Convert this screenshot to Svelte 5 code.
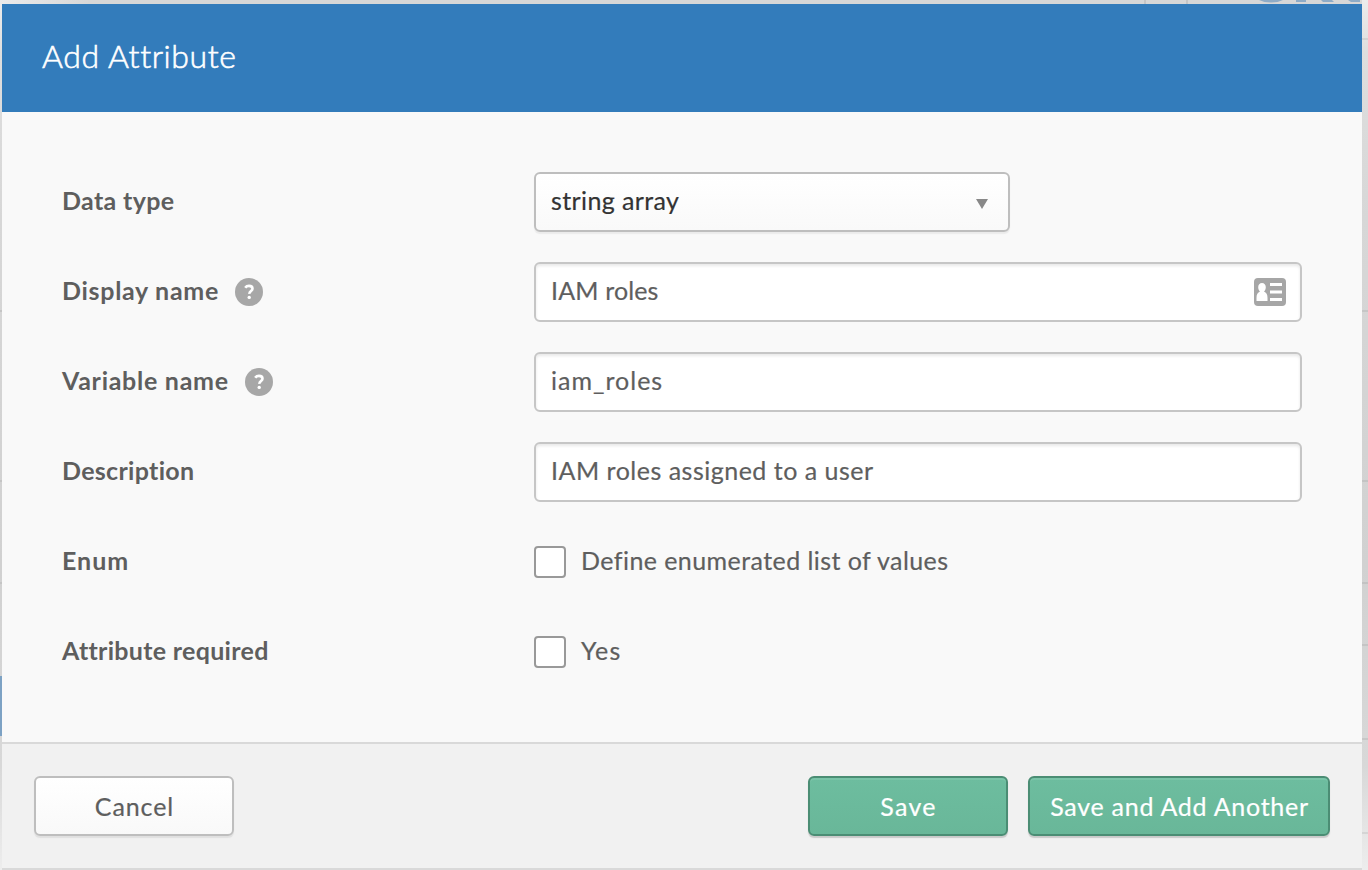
<script>
  let displayName = $state('IAM roles');
  let variableName = $state('iam_roles');
  let description = $state('IAM roles assigned to a user');
  let isEnum = $state(false);
  let required = $state(false);
</script>

{#snippet help()}
  <svg class="help" viewBox="0 0 28 28" aria-hidden="true">
    <circle cx="14" cy="14" r="14" fill="#a7a7a7" />
    <path d="M10.2 9.700C11.200 8.300 12.500 7.900 14 7.900c2.200 0 3.500 1.100 3.500 2.800 0 2.400-3.200 2.400-3.100 5.200" fill="none" stroke="#fff" stroke-width="2.600" />
    <circle cx="14.200" cy="19.400" r="1.700" fill="#fff" />
  </svg>
{/snippet}

<div class="page">
  <svg class="backdrop" viewBox="0 0 1368 870" aria-hidden="true">
    <defs>
      <linearGradient id="corner" x1="0" x2="1"><stop offset="0" stop-color="#ebebeb" /><stop offset="1" stop-color="#d7d7d7" /></linearGradient>
      <linearGradient id="side" x1="0" x2="0" y1="0" y2="1"><stop offset="0" stop-color="#ececec" /><stop offset=".06" stop-color="#dedede" /><stop offset=".25" stop-color="#d7d7d7" /><stop offset=".65" stop-color="#d1d1d1" /><stop offset=".88" stop-color="#d8d8d8" /><stop offset="1" stop-color="#ededed" /></linearGradient>
    </defs>
    <rect width="1368" height="4" fill="#d7d7d7" />
    <rect width="90" height="4" fill="url(#corner)" />
    <rect y="4" width="2" height="866" fill="url(#side)" />
    <rect x="1362" width="6" height="870" fill="url(#side)" />
    <path d="M1144 0h2v4h-2zM1186 0h2v4h-2z" fill="#c5c5c5" />
    <path d="M1259 0h24q-5 2.500-12 2.500t-12-2.500M1296 0h10v2h-10zM1321 0h11l2 2h-11zM1348 0h12v2h-9z" fill="#8eabc6" />
    <path d="M1362 38h6v2h-6zM1362 310h6v2h-6zM1362 480h6v2h-6zM1362 582h6v2h-6zM1362 644h6v2h-6zM1362 738h6v2h-6zM1362 832h6v2h-6z" fill="#000" opacity=".07" />
    <path d="M0 310h2v2H0zM0 480h2v2H0zM0 582h2v2H0z" fill="#c5c5c5" />
    <path d="M0 676h2v60H0z" fill="#7da2c4" />
  </svg>

  <form class="dialog" onsubmit={(e) => e.preventDefault()}>
    <header><h1>Add Attribute</h1></header>

    <div class="fields">
      <div class="row">
        <div class="label t-type">Data type</div>
        <button type="button" class="select">
          <span class="t-array">string array</span>
          <svg width="12" height="10" viewBox="0 0 12 10" aria-hidden="true"><path d="M0 0h12L6 10z" fill="#888" /></svg>
        </button>
      </div>
      <div class="row">
        <label class="label t-display" for="display">Display name</label>{@render help()}
        <div class="input">
          <input id="display" class="t-roles" bind:value={displayName} />
          <svg width="32" height="28" viewBox="0 0 32 28" aria-hidden="true">
            <rect width="32" height="28" rx="4" fill="#a6a6a6" />
            <path d="M8 5c2.300 0 3.800 1.800 3.800 4.300 0 1.800-.7 3.200-1.800 4.300 2.300.8 3.500 3.300 3.500 6.200V23h-11v-3.200c0-2.900 1.200-5.400 3.500-6.200-1.100-1.100-1.800-2.500-1.800-4.300C4.200 6.800 5.700 5 8 5zM16 5h12v3H16zM16 12.500h12v3H16zM16 20h12v3H16z" fill="#fff" />
          </svg>
        </div>
      </div>
      <div class="row">
        <label class="label t-variable" for="variable">Variable name</label>{@render help()}
        <div class="input"><input id="variable" class="t-iam" bind:value={variableName} /></div>
      </div>
      <div class="row">
        <label class="label t-desc" for="description">Description</label>
        <div class="input"><input id="description" class="t-assigned" bind:value={description} /></div>
      </div>
      <div class="row">
        <div class="label t-enum">Enum</div>
        <label class="check"><input type="checkbox" bind:checked={isEnum} /><span class="t-define">Define enumerated list of values</span></label>
      </div>
      <div class="row">
        <div class="label t-required">Attribute required</div>
        <label class="check"><input type="checkbox" bind:checked={required} /><span class="t-yes">Yes</span></label>
      </div>
    </div>

    <footer>
      <button type="button" class="btn cancel"><span class="t-cancel">Cancel</span></button>
      <button type="submit" class="btn primary"><span class="t-save">Save</span></button>
      <button type="button" class="btn primary wide"><span class="t-another">Save and Add Another</span></button>
    </footer>
  </form>
</div>

<style>
  :global(body) { margin: 0; background: #d7d7d7; }
  .page {
    position: relative;
    box-sizing: border-box;
    width: 1368px;
    height: 870px;
    padding: 4px 6px 0 2px;
    overflow: hidden;
    font-family: Lato, sans-serif;
    font-size: 25px;
    font-variant-ligatures: none;
    color: #5e5e5e;
    -webkit-text-stroke: 0.2px currentColor;
  }
  .backdrop { position: absolute; top: 0; left: 0; width: 1368px; height: 870px; }
  .dialog { position: relative; display: flex; flex-direction: column; height: 866px; background: #f9f9f9; }
  header { box-sizing: border-box; height: 108px; padding: 0 40px; background: #337cbb; }
  h1 { margin: 0; font-size: 32px; font-weight: 300; line-height: 103px; letter-spacing: 0.6px; color: #fff; -webkit-text-stroke: 0.6px #fff; }
  .fields { display: flex; flex-direction: column; gap: 30px; height: 570px; padding: 60px 60px 0; }
  .row { display: flex; align-items: center; height: 60px; }
  .label { height: 60px; font-weight: 700; line-height: 56px; white-space: nowrap; -webkit-text-stroke: 0; }
  .help { width: 28px; height: 28px; margin-left: 16px; }
  .select, .input, .check { box-sizing: border-box; margin-left: auto; }
  .input, .select {
    display: flex;
    align-items: center;
    justify-content: space-between;
    width: 768px;
    height: 60px;
    padding: 0 14px 0 15px;
    border: 2px solid #c6c6c6;
    border-radius: 6px;
    background: #fff;
    box-shadow: inset 0 2px 3px #e9e9e9;
  }
  .input input {
    box-sizing: border-box;
    flex: 1;
    min-width: 0;
    height: 54px;
    margin: 0;
    padding: 0 0 4px;
    border: 0;
    outline: 0;
    background: none;
    font: inherit;
    font-variant-ligatures: none;
    color: inherit;
  }
  .select {
    width: 476px;
    margin-right: 292px;
    padding-right: 20px;
    border-color: #bebebe;
    background: linear-gradient(#fff, #f9f9f9);
    box-shadow: 0 2px 1px #ebebeb;
    font: inherit;
    color: #333;
  }
  .select span, .check span { padding-bottom: 4px; }
  .select svg { margin-top: 3px; }
  .check { display: flex; align-items: center; gap: 15px; width: 768px; white-space: nowrap; }
  .check input { appearance: none; box-sizing: border-box; width: 32px; height: 32px; margin: 0; border: 2px solid #999; border-radius: 4px; background: #fff; }
  footer {
    box-sizing: border-box;
    display: flex;
    gap: 20px;
    height: 128px;
    padding: 32px 32px 0;
    border-top: 2px solid #d9d9d9;
    border-bottom: 2px solid #d9d9d9;
    background: #f1f1f1;
  }
  .btn { box-sizing: border-box; width: 200px; height: 60px; padding: 0 0 1px 1px; border: 2px solid #bebebe; border-radius: 6px; font: inherit; white-space: nowrap; }
  .cancel { margin-right: auto; background: linear-gradient(#fff, #f9f9f9); box-shadow: 0 2px 1px #e0e0e0; color: #5e5e5e; }
  .primary { border-color: #4b8d74; background: linear-gradient(#6dbd9f, #69b799); box-shadow: inset 0 2px 0 #79c4a8, 0 2px 1px #cacaca; color: #fff; }
  .wide { width: 302px; }

  .t-type { letter-spacing: 0.35px; }
  .t-display { letter-spacing: 0.7px; }
  .t-variable { letter-spacing: 0.72px; }
  .t-desc { letter-spacing: 0.3px; }
  .t-enum { letter-spacing: 1px; }
  .t-required { letter-spacing: 0.3px; }
  .t-array { letter-spacing: 0.38px; }
  .input .t-roles { letter-spacing: 0.15px; }
  .input .t-iam { letter-spacing: 1px; }
  .input .t-assigned { letter-spacing: 0.5px; }
  .t-define { letter-spacing: 0.43px; }
  .t-yes { letter-spacing: 1.2px; }
  .t-cancel { letter-spacing: 0.9px; }
  .t-save { letter-spacing: 1.3px; }
  .t-another { letter-spacing: 0.74px; }
</style>
